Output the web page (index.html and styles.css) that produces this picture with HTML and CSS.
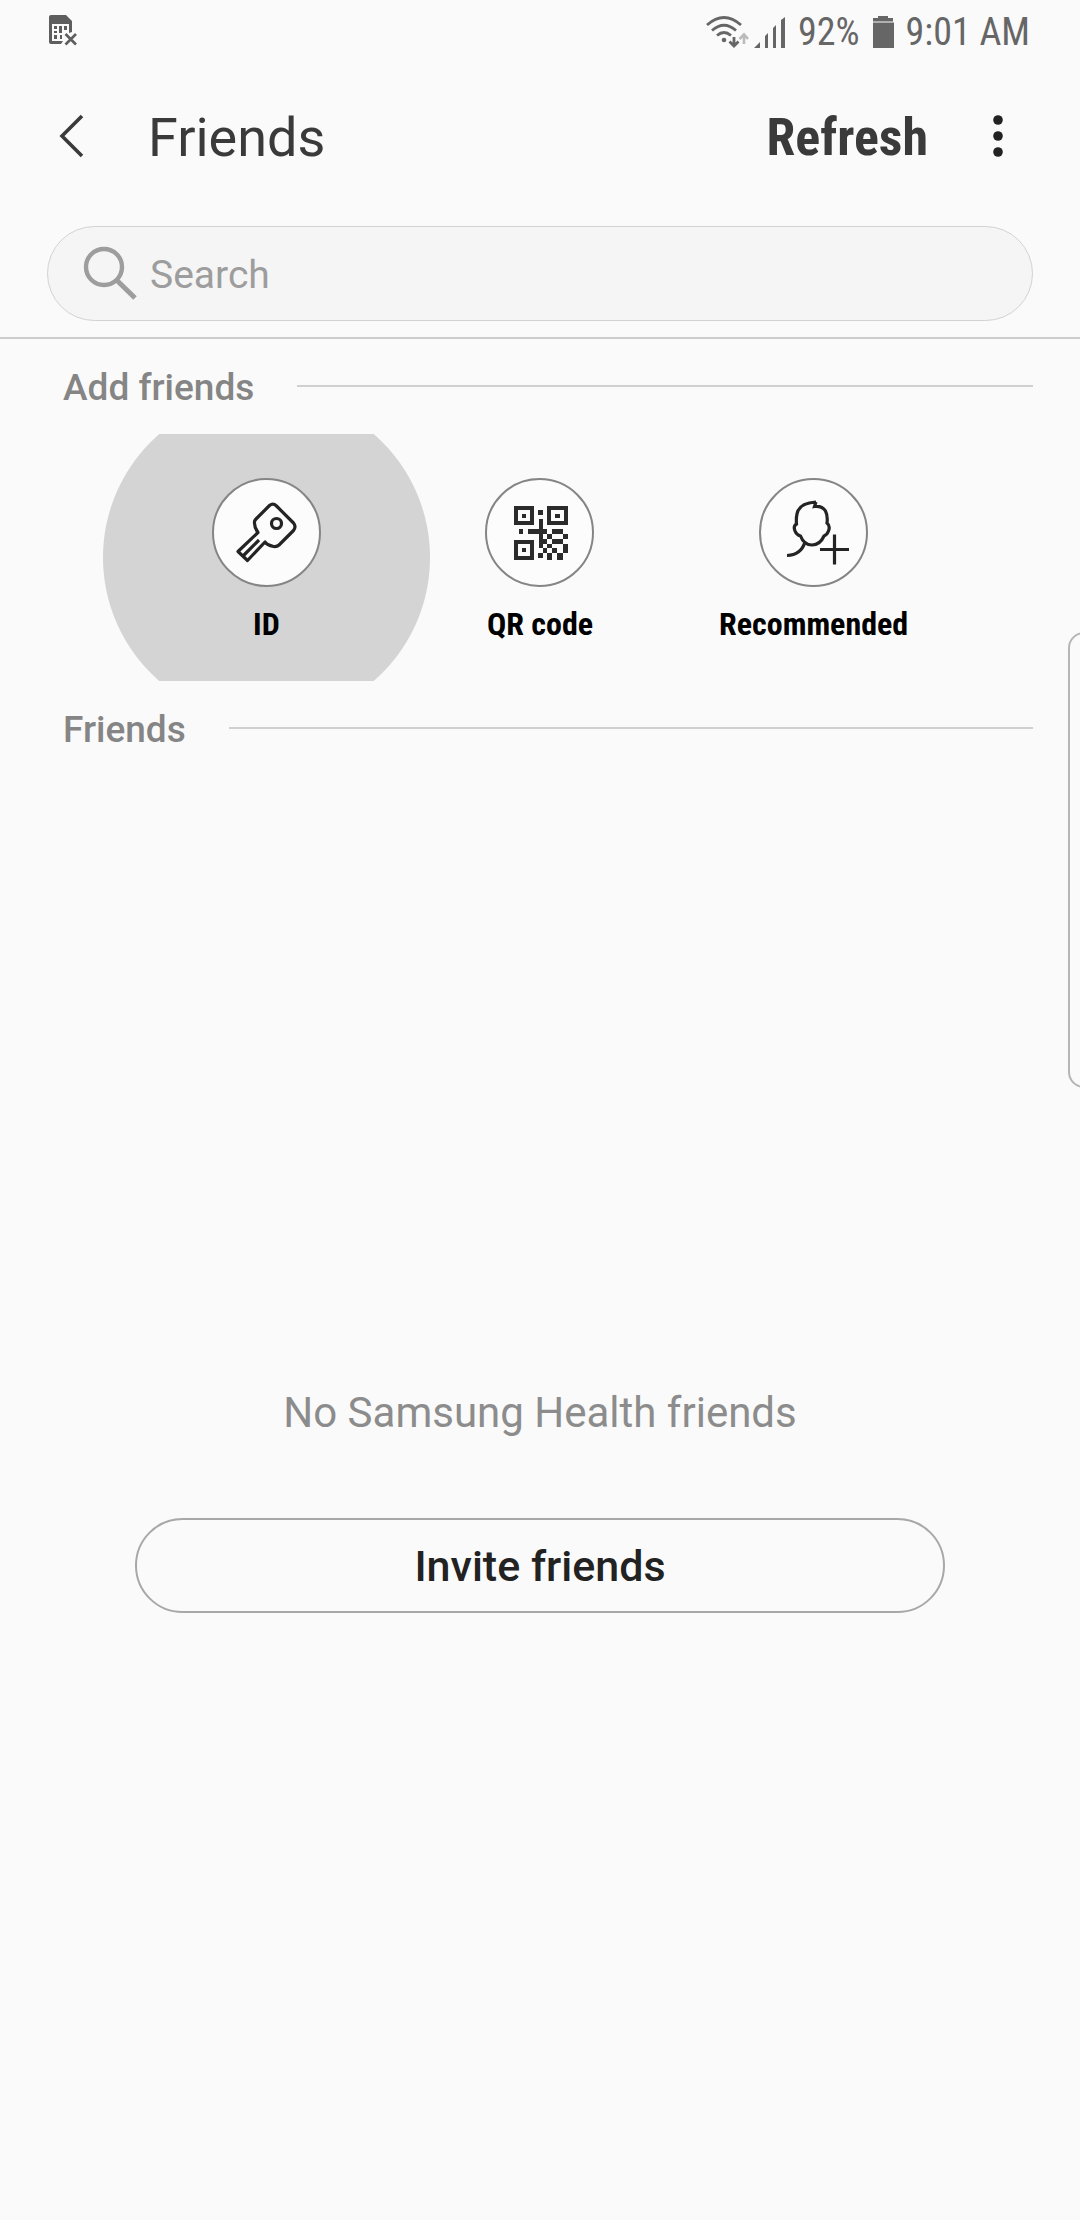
FILE: index.html
```html
<!DOCTYPE html>
<html lang="en">
<head>
<meta charset="utf-8">
<meta name="viewport" content="width=device-width, initial-scale=1">
<title>Friends</title>
<link rel="stylesheet" href="styles.css">
</head>
<body>
<div class="screen">
  <div class="status-bar">
    <svg class="status-sim" viewBox="0 0 28 31" width="28" height="31" aria-label="No SIM card">
      <path fill="#5e5e5e" fill-rule="evenodd" d="M2 0H17L23 6V17L20 18V9H3V26H11L14 26L12 29H2Q0 29 0 27V2Q0 0 2 0Z"/>
      <path fill="#5e5e5e" d="M5 11h3v3h-3zM5 16h3v2h-3zM5 20h3v4h-3zM10 11h3v7h-3zM11 20h2v4h-2zM15 11h3v4h-3z"/>
      <path stroke="#5e5e5e" stroke-width="2.600" d="M16.500 19L27 29.500M27 19L16.500 29.500"/>
    </svg>
    <div class="status-right">
      <svg viewBox="0 0 42 32" width="42" height="32" aria-label="Wi-Fi">
        <g fill="none" stroke="#666" stroke-width="2.800">
          <path d="M1 9Q18 -6 35 9"/>
          <path d="M6 14.500Q18 4 30 14.500"/>
          <path d="M11 19.500Q18 13.500 25 19.500"/>
          <path d="M28 21V30M23.500 25.500L28 30L32.500 25.500"/>
        </g>
        <circle cx="18" cy="24" r="2.300" fill="#666"/>
        <path fill="none" stroke="#bbb" stroke-width="2.600" d="M38 28V19M33.500 23L38 18.500L42 23"/>
      </svg>
      <svg class="status-signal" viewBox="0 0 32 31" width="32" height="31" aria-label="Signal">
        <path fill="#666" d="M0 31L6 25V31ZM11 19L14 16V31H11ZM19 11L22 8V31H19ZM27 3L31 0V31H27Z"/>
      </svg>
      <span>92%</span>
      <svg class="status-battery" viewBox="0 0 22 32" width="22" height="32" aria-label="Battery">
        <path fill="#666" d="M6 0H16V2H21V5.500H1V2H6ZM1 6.500H22V32H1Z"/>
      </svg>
      <span>9:01 AM</span>
    </div>
  </div>

  <header class="app-bar">
    <button class="icon-button back" type="button" aria-label="Back">
      <svg viewBox="0 0 24 42" width="24" height="42"><path fill="none" stroke="#3a3a3a" stroke-width="3.600" d="M22 1L2 21L22 41"/></svg>
    </button>
    <h1 class="title">Friends</h1>
    <button class="refresh" type="button">Refresh</button>
    <button class="icon-button more" type="button" aria-label="More options">
      <svg viewBox="0 0 10 42" width="10" height="42" fill="#222"><circle cx="5" cy="5" r="4.800"/><circle cx="5" cy="21" r="4.800"/><circle cx="5" cy="37" r="4.800"/></svg>
    </button>
  </header>

  <form class="search-row">
    <label class="search-box">
      <svg viewBox="0 0 54 54" width="54" height="54" fill="none" stroke="#9d9d9d"><circle cx="20" cy="20" r="18" stroke-width="4.400"/><path stroke-width="5" d="M32.500 33L51 51"/></svg>
      <input class="search-input" type="search" placeholder="Search" aria-label="Search">
    </label>
  </form>

  <main class="content">
    <h2 class="section-title">Add friends</h2>
    <div class="add-options">
      <button class="option pressed" type="button">
        <span class="option-icon">
          <svg viewBox="0 0 62 62" width="62" height="62" fill="none" stroke="#242424" stroke-width="3.200">
            <path stroke-linejoin="round" d="M34.500 3.500Q38 .500 41.500 4L58.500 21Q61.500 24.500 58.500 28.500L44 43Q42 45 38.500 44.500Q32 43 30 40L12.500 58.500L3 49.500L23 30.500Q19 25 19.500 20Q19.500 18.500 21 17Z"/>
            <circle cx="41.500" cy="21.500" r="5"/>
            <path d="M8 54L24 38"/>
          </svg>
        </span>
        <span class="option-label">ID</span>
      </button>
      <button class="option" type="button">
        <span class="option-icon">
          <svg viewBox="-1 0 54 54" width="54" height="54" fill="#2b2b2b" fill-rule="evenodd">
            <path d="M0 0H20V19H0ZM4 4V15H16V4ZM33 0H54V19H33ZM37 4V15H50V4ZM0 34H20V54H0ZM4 38V50H16V38Z"/>
            <path d="M8 8h4v4h-4zM41 8h5v4h-5zM8 42h4v4h-4zM24 4h5v5h-5zM5 23h4v5h-4z"/>
            <path d="M25 13h4v10h4v5h-4v5h4v-5h5v5h-5v5h-4v4h-4V28H14v-5h11zM38 23h11v5h-11zM49 28h5v5h-5zM38 33h11v5h-11zM49 38h5v9h-5zM33 38h5v4h-5zM29 42h4v5h-4zM38 42h5v5h-5zM24 47h5v5h-5zM33 47h5v7h-5zM43 47h6v7h-6z"/>
          </svg>
        </span>
        <span class="option-label">QR code</span>
      </button>
      <button class="option" type="button">
        <span class="option-icon">
          <svg viewBox="-8 0 70 65" width="70" height="65" fill="none" stroke="#242424" stroke-width="3.200">
            <path d="M29 2Q12 3 10 14Q9 18 9.500 24Q6 26 8 31Q9.500 35 13.500 36Q17 45 25 45Q33 45 37 36Q40 35 41.500 31Q43.500 26 40 23Q41 16 38.500 11Q35 5.500 27.500 6.500L29 2"/>
            <path d="M18 42Q14 55 0 55.500"/>
            <path d="M47.500 34.500V64.500M33 49.500H62"/>
          </svg>
        </span>
        <span class="option-label">Recommended</span>
      </button>
    </div>

    <h2 class="section-title">Friends</h2>
    <section class="empty">
      <p class="empty-text">No Samsung Health friends</p>
      <button class="invite" type="button">Invite friends</button>
    </section>
  </main>
  <div class="edge-handle"></div>
</div>
</body>
</html>
```
FILE: styles.css
```css
* {
  box-sizing: border-box;
}

body {
  margin: 0;
  background: #fafafa;
  font-family: Roboto, "Noto Sans", sans-serif;
  color: #3a3a3a;
}

button {
  margin: 0;
  padding: 0;
  border: 0;
  background: none;
  font-family: inherit;
  color: inherit;
  cursor: pointer;
}

svg {
  display: block;
  flex: none;
  overflow: visible;
}

h1,
h2,
p {
  margin: 0;
}

.screen {
  position: relative;
  display: flex;
  flex-direction: column;
  min-height: 100vh;
  overflow: hidden;
}

.status-bar {
  display: flex;
  justify-content: space-between;
  height: 64px;
  padding: 0 50px 0 49px;
  font: 400 38px/66px "Roboto Condensed", Roboto, sans-serif;
  color: #666;
}

.status-sim {
  margin-top: 15px;
}

.status-right {
  display: flex;
  align-items: center;
  gap: 12px;
}

.status-signal {
  margin-left: -6px;
}

.app-bar {
  display: flex;
  align-items: center;
  height: 144px;
  padding: 0 46px 0 36px;
}

.icon-button {
  display: flex;
  align-items: center;
  justify-content: center;
  width: 72px;
  height: 72px;
}

.title {
  flex: 1;
  margin-left: 40px;
  padding-top: 4px;
  font-size: 54px;
  line-height: 72px;
  font-weight: 400;
}

.refresh {
  margin-right: 34px;
  padding-top: 4px;
  font: 700 52px/72px "Roboto Condensed", Roboto, sans-serif;
}

.search-row {
  padding: 18px 47px 16px;
  border-bottom: 2px solid #ccc;
}

.search-box {
  display: flex;
  align-items: center;
  gap: 12px;
  height: 95px;
  padding: 0 36px;
  border: 1px solid #d2d2d2;
  border-radius: 48px;
  background: #f5f5f5;
}

.search-input {
  flex: 1;
  min-width: 0;
  padding: 2px 0 0;
  border: 0;
  outline: 0;
  background: none;
  font: 400 39px/48px Roboto, sans-serif;
  color: #3a3a3a;
}

.search-input::placeholder {
  color: #9d9d9d;
  opacity: 1;
}

.content {
  flex: 1;
  display: flex;
  flex-direction: column;
}

.section-title {
  display: flex;
  align-items: center;
  gap: 43px;
  padding: 3px 47px 0 63px;
  font-size: 37px;
  line-height: 92px;
  font-weight: 500;
  color: #858585;
}

.section-title::after {
  content: "";
  flex: 1;
  height: 2px;
  margin-bottom: 4px;
  background: #d0d0d0;
}

.add-options {
  display: grid;
  grid-template-columns: repeat(3, 1fr);
  padding: 0 12%;
}

.option {
  position: relative;
  isolation: isolate;
  display: flex;
  flex-direction: column;
  align-items: center;
  gap: 17px;
  height: 247px;
  padding-top: 44px;
  color: #000;
}

.pressed::before {
  content: "";
  position: absolute;
  z-index: -1;
  inset: 0 -30px;
  background: radial-gradient(circle, #d4d4d4 163px, transparent 164px);
}

.option-icon {
  display: flex;
  align-items: center;
  justify-content: center;
  width: 109px;
  height: 109px;
  border: 2px solid #858585;
  border-radius: 50%;
  background: #fcfcfc;
}

.option-label {
  font: 700 32px/40px "Roboto Condensed", Roboto, sans-serif;
}

.empty {
  flex: 1;
  display: flex;
  flex-direction: column;
  align-items: center;
  justify-content: center;
  gap: 80px;
  padding: 4px 135px 0;
}

.empty-text {
  font-size: 42px;
  line-height: 50px;
  color: #8c8c8c;
}

.invite {
  width: 100%;
  height: 95px;
  padding-top: 2px;
  border: 2px solid #a8a8a8;
  border-radius: 48px;
  font-size: 43px;
  font-weight: 500;
  color: #222;
}

.edge-handle {
  position: absolute;
  top: 632px;
  right: -24px;
  width: 36px;
  height: 456px;
  border: 2px solid #b5b5b5;
  border-radius: 16px;
}
```
